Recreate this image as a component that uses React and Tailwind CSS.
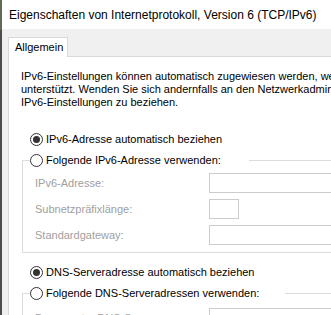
import React from 'react';

const font = { fontFamily: '"Liberation Sans", Arial, sans-serif' };

const Radio = ({ checked, label }) => (
  <div className="flex h-[16px] items-center">
    <span className="flex h-[13px] w-[13px] shrink-0 items-center justify-center rounded-full border border-[#333333] bg-white">
      {checked && <span className="h-[7px] w-[7px] rounded-full bg-[#333333]" />}
    </span>
    <span className="ml-[3px] whitespace-nowrap text-[11px] text-black">{label}</span>
  </div>
);

const Field = ({ label, small }) => (
  <div className="flex h-[20px] shrink-0 items-center">
    <span className="w-[174px] shrink-0 whitespace-nowrap text-[11px] text-[#a0a0a0]">{label}</span>
    <div className={`h-[20px] border border-[#cccccc] bg-white ${small ? 'w-[30px]' : 'w-[160px]'}`} />
  </div>
);

export default function App() {
  return (
    <div className="flex h-[315px] w-[331px] items-start overflow-hidden bg-[#f0f0f0]" style={font}>
      {/* desktop edge behind the window */}
      <div className="flex h-[315px] w-[2px] shrink-0 flex-col">
        <div className="h-[30px] shrink-0 bg-[#5f6b52]" />
        <div className="flex-1 bg-[#4d4d4d]" />
      </div>

      <div className="flex w-[380px] shrink-0 flex-col">
        {/* title bar */}
        <div className="flex h-[29px] shrink-0 items-center bg-white pl-[7px]">
          <span className="whitespace-nowrap text-[12px] text-black">
            Eigenschaften von Internetprotokoll, Version 6 (TCP/IPv6)
          </span>
        </div>

        <div className="flex flex-col pl-[6px] pt-[8px]">
          {/* tabs */}
          <div className="relative z-10 -mb-px flex shrink-0">
            <div className="flex h-[20px] w-[60px] items-center border border-b-0 border-[#d9d9d9] bg-white pl-[6px] text-[11px] text-black">
              Allgemein
            </div>
          </div>

          {/* tab page */}
          <div className="flex h-[300px] flex-col border-l border-t border-[#d9d9d9] bg-white pl-[12px] pt-[13px]">
            <div className="shrink-0 whitespace-nowrap text-[11px] leading-[13px] text-black">
              <div>IPv6-Einstellungen können automatisch zugewiesen werden, wenn das Netzwerk</div>
              <div>unterstützt. Wenden Sie sich andernfalls an den Netzwerkadministrator, um die</div>
              <div>IPv6-Einstellungen zu beziehen.</div>
            </div>

            <div className="mt-[22px] shrink-0 pl-[9px]">
              <Radio checked label="IPv6-Adresse automatisch beziehen" />
            </div>

            <div className="ml-[1px] mt-[13px] flex shrink-0 flex-col border-y border-l border-[#dcdcdc] pb-[7px] pl-[12px]">
              <div className="-ml-[5px] -mt-[9px] w-[219px] bg-white">
                <Radio label="Folgende IPv6-Adresse verwenden:" />
              </div>
              <div className="mt-[5px] flex flex-col gap-[6px]">
                <Field label="IPv6-Adresse:" />
                <Field label="Subnetzpräfixlänge:" small />
                <Field label="Standardgateway:" />
              </div>
            </div>

            <div className="mt-[11px] shrink-0 pl-[9px]">
              <Radio checked label="DNS-Serveradresse automatisch beziehen" />
            </div>

            <div className="ml-[1px] mt-[13px] flex shrink-0 flex-col border-l border-t border-[#dcdcdc] pl-[12px]">
              <div className="-ml-[5px] -mt-[9px] w-[255px] bg-white">
                <Radio label="Folgende DNS-Serveradressen verwenden:" />
              </div>
              <div className="mt-[7px] flex flex-col gap-[6px]">
                <Field label="Bevorzugter DNS-Server:" />
                <Field label="Alternativer DNS-Server:" />
              </div>
            </div>
          </div>
        </div>
      </div>
    </div>
  );
}
